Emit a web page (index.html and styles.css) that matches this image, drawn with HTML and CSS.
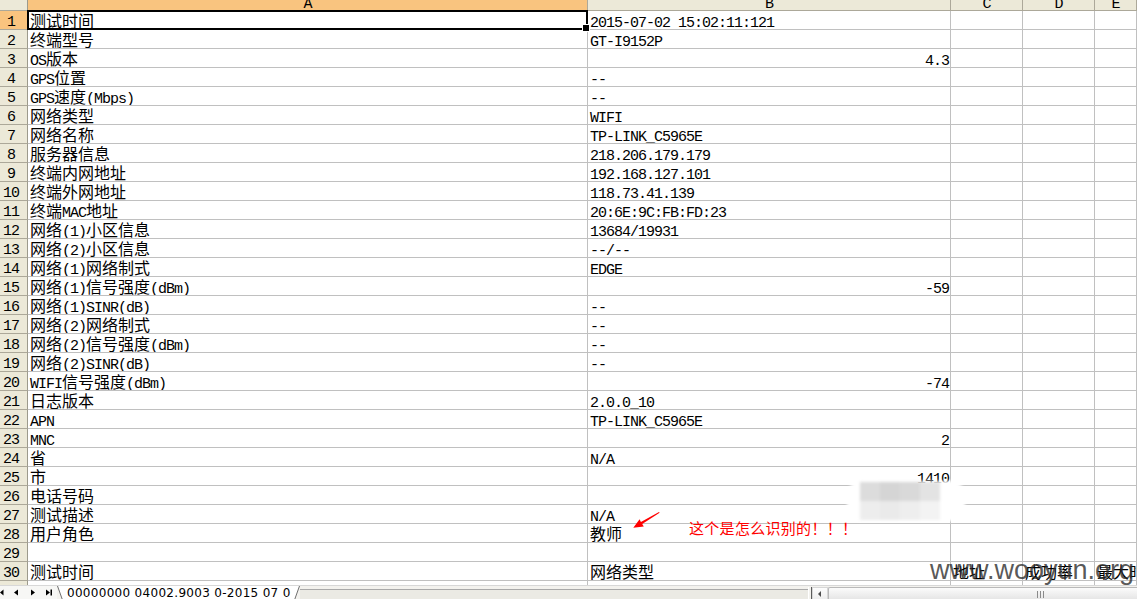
FILE: index.html
```html
<!DOCTYPE html>
<html lang="zh-CN">
<head>
<meta charset="utf-8">
<title>Sheet1</title>
<link rel="stylesheet" href="styles.css">
</head>
<body>
<div class="app">
  <div class="sheet">
    <div class="hd corner"></div>
    <div class="hd sel">A</div>
    <div class="hd">B</div>
    <div class="hd">C</div>
    <div class="hd">D</div>
    <div class="hd">E</div>

    <div class="rh sel">1</div>
    <div class="c a1">测试时间</div>
    <div class="c"><span class="m">2015-07-02 15:02:11:121</span></div>
    <div class="c"></div><div class="c"></div><div class="c"></div>

    <div class="rh">2</div>
    <div class="c">终端型号</div>
    <div class="c"><span class="m">GT-I9152P</span></div>
    <div class="c"></div><div class="c"></div><div class="c"></div>

    <div class="rh">3</div>
    <div class="c"><span class="m">OS</span>版本</div>
    <div class="c num"><span class="m">4.3</span></div>
    <div class="c"></div><div class="c"></div><div class="c"></div>

    <div class="rh">4</div>
    <div class="c"><span class="m">GPS</span>位置</div>
    <div class="c"><span class="m">--</span></div>
    <div class="c"></div><div class="c"></div><div class="c"></div>

    <div class="rh">5</div>
    <div class="c"><span class="m">GPS</span>速度<span class="m">(Mbps)</span></div>
    <div class="c"><span class="m">--</span></div>
    <div class="c"></div><div class="c"></div><div class="c"></div>

    <div class="rh">6</div>
    <div class="c">网络类型</div>
    <div class="c"><span class="m">WIFI</span></div>
    <div class="c"></div><div class="c"></div><div class="c"></div>

    <div class="rh">7</div>
    <div class="c">网络名称</div>
    <div class="c"><span class="m">TP-LINK_C5965E</span></div>
    <div class="c"></div><div class="c"></div><div class="c"></div>

    <div class="rh">8</div>
    <div class="c">服务器信息</div>
    <div class="c"><span class="m">218.206.179.179</span></div>
    <div class="c"></div><div class="c"></div><div class="c"></div>

    <div class="rh">9</div>
    <div class="c">终端内网地址</div>
    <div class="c"><span class="m">192.168.127.101</span></div>
    <div class="c"></div><div class="c"></div><div class="c"></div>

    <div class="rh">10</div>
    <div class="c">终端外网地址</div>
    <div class="c"><span class="m">118.73.41.139</span></div>
    <div class="c"></div><div class="c"></div><div class="c"></div>

    <div class="rh">11</div>
    <div class="c">终端<span class="m">MAC</span>地址</div>
    <div class="c"><span class="m">20:6E:9C:FB:FD:23</span></div>
    <div class="c"></div><div class="c"></div><div class="c"></div>

    <div class="rh">12</div>
    <div class="c">网络<span class="m">(1)</span>小区信息</div>
    <div class="c"><span class="m">13684/19931</span></div>
    <div class="c"></div><div class="c"></div><div class="c"></div>

    <div class="rh">13</div>
    <div class="c">网络<span class="m">(2)</span>小区信息</div>
    <div class="c"><span class="m">--/--</span></div>
    <div class="c"></div><div class="c"></div><div class="c"></div>

    <div class="rh">14</div>
    <div class="c">网络<span class="m">(1)</span>网络制式</div>
    <div class="c"><span class="m">EDGE</span></div>
    <div class="c"></div><div class="c"></div><div class="c"></div>

    <div class="rh">15</div>
    <div class="c">网络<span class="m">(1)</span>信号强度<span class="m">(dBm)</span></div>
    <div class="c num"><span class="m">-59</span></div>
    <div class="c"></div><div class="c"></div><div class="c"></div>

    <div class="rh">16</div>
    <div class="c">网络<span class="m">(1)SINR(dB)</span></div>
    <div class="c"><span class="m">--</span></div>
    <div class="c"></div><div class="c"></div><div class="c"></div>

    <div class="rh">17</div>
    <div class="c">网络<span class="m">(2)</span>网络制式</div>
    <div class="c"><span class="m">--</span></div>
    <div class="c"></div><div class="c"></div><div class="c"></div>

    <div class="rh">18</div>
    <div class="c">网络<span class="m">(2)</span>信号强度<span class="m">(dBm)</span></div>
    <div class="c"><span class="m">--</span></div>
    <div class="c"></div><div class="c"></div><div class="c"></div>

    <div class="rh">19</div>
    <div class="c">网络<span class="m">(2)SINR(dB)</span></div>
    <div class="c"><span class="m">--</span></div>
    <div class="c"></div><div class="c"></div><div class="c"></div>

    <div class="rh">20</div>
    <div class="c"><span class="m">WIFI</span>信号强度<span class="m">(dBm)</span></div>
    <div class="c num"><span class="m">-74</span></div>
    <div class="c"></div><div class="c"></div><div class="c"></div>

    <div class="rh">21</div>
    <div class="c">日志版本</div>
    <div class="c"><span class="m">2.0.0_10</span></div>
    <div class="c"></div><div class="c"></div><div class="c"></div>

    <div class="rh">22</div>
    <div class="c"><span class="m">APN</span></div>
    <div class="c"><span class="m">TP-LINK_C5965E</span></div>
    <div class="c"></div><div class="c"></div><div class="c"></div>

    <div class="rh">23</div>
    <div class="c"><span class="m">MNC</span></div>
    <div class="c num"><span class="m">2</span></div>
    <div class="c"></div><div class="c"></div><div class="c"></div>

    <div class="rh">24</div>
    <div class="c">省</div>
    <div class="c"><span class="m">N/A</span></div>
    <div class="c"></div><div class="c"></div><div class="c"></div>

    <div class="rh">25</div>
    <div class="c">市</div>
    <div class="c num"><span class="m">1410</span></div>
    <div class="c"></div><div class="c"></div><div class="c"></div>

    <div class="rh">26</div>
    <div class="c">电话号码</div>
    <div class="c"></div>
    <div class="c"></div><div class="c"></div><div class="c"></div>

    <div class="rh">27</div>
    <div class="c">测试描述</div>
    <div class="c"><span class="m">N/A</span></div>
    <div class="c"></div><div class="c"></div><div class="c"></div>

    <div class="rh">28</div>
    <div class="c">用户角色</div>
    <div class="c">教师</div>
    <div class="c"></div><div class="c"></div><div class="c"></div>

    <div class="rh">29</div>
    <div class="c"></div>
    <div class="c"></div>
    <div class="c"></div><div class="c"></div><div class="c"></div>

    <div class="rh">30</div>
    <div class="c">测试时间</div>
    <div class="c">网络类型</div>
    <div class="c">地址</div><div class="c">成功率</div><div class="c">最大时</div>

    <div class="rh part"></div>
    <div class="c part"></div>
    <div class="c part"></div>
    <div class="c part"></div><div class="c part"></div><div class="c part"></div>
  </div>

  <div class="bar">
    <div class="nav">
      <svg width="56" height="14" viewBox="0 0 56 14">
        <polygon points="0,6.5 3.5,3.5 3.5,9.5" fill="#000"/>
        <polygon points="14,6.5 18,3.5 18,9.5" fill="#000"/>
        <polygon points="31,3.5 35,6.5 31,9.5" fill="#000"/>
        <polygon points="46,3.5 50,6.5 46,9.5" fill="#000"/>
        <rect x="50.5" y="3.5" width="1.5" height="6" fill="#000"/>
      </svg>
    </div>
    <div class="tab">
      <svg class="edge" width="7" height="14" viewBox="0 0 7 14">
        <polygon points="0.5,0 7,0 7,14 5.5,14" fill="#fff"/>
        <line x1="0.5" y1="0" x2="5.5" y2="14" stroke="#6f6f6f" stroke-width="1"/>
      </svg>
      <span class="tabtext">00000000 04002.9003 0-2015 07 0</span>
      <svg class="edge" width="8" height="14" viewBox="0 0 8 14">
        <polygon points="0,0 7.5,0 2.5,14 0,14" fill="#fff"/>
        <line x1="7.5" y1="0" x2="2.5" y2="14" stroke="#6f6f6f" stroke-width="1"/>
      </svg>
    </div>
    <div class="tabfill"></div>
    <div class="split"></div>
    <div class="hscroll">
      <div class="sbtn">
        <svg width="16" height="12" viewBox="0 0 16 12">
          <polygon points="5,6 8,3 8,9" fill="#4d4d4d"/>
        </svg>
      </div>
      <div class="thumb">
        <svg class="grip" width="9" height="7" viewBox="0 0 9 7">
          <rect x="0" y="0" width="1" height="7" fill="#8a8a8a"/>
          <rect x="3" y="0" width="1" height="7" fill="#8a8a8a"/>
          <rect x="6" y="0" width="1" height="7" fill="#8a8a8a"/>
        </svg>
      </div>
    </div>
  </div>

  <div class="smudge"><i></i><i></i><i></i><i></i><i></i><i></i><i></i><i></i></div>

  <svg class="arrow" width="34" height="22" viewBox="0 0 34 22">
    <polygon points="3.3,17.7 13.8,16.4 12.2,14 29.6,2.8 29,1.9 10.9,11.9 9.6,9.3" fill="#ff0000"/>
  </svg>
  <div class="note">这个是怎么识别的！！！</div>

  <div class="wm">www.wooyun.org</div>
</div>
</body>
</html>
```

FILE: styles.css
```css
* {
  box-sizing: border-box;
  margin: 0;
  padding: 0;
}

html, body {
  width: 1137px;
  height: 599px;
  overflow: hidden;
  background: #fff;
}

.app {
  position: relative;
  width: 1137px;
  height: 599px;
  overflow: hidden;
  background: #fff;
  color: #000;
}

.sheet {
  display: grid;
  grid-template-columns: 28px 560px 363px 72px 72px 42px;
  grid-template-rows: 11px repeat(30, 19px) 4px;
}

/* column headers */
.hd {
  background: #ece9d8;
  border-right: 1px solid #aca899;
  border-bottom: 1px solid #aca899;
  font-family: "Liberation Mono", monospace;
  font-size: 15px;
  line-height: 9px;
  letter-spacing: -1px;
  text-align: center;
  overflow: hidden;
}

.hd.corner {
  border-right-color: #9c9a8c;
}

.hd.sel {
  background: #f9c47f;
  border-bottom-color: #0a246a;
}

/* row headers */
.rh {
  background: #ece9d8;
  border-right: 1px solid #9c9a8c;
  border-bottom: 1px solid #aca899;
  font-family: "Liberation Mono", monospace;
  font-size: 15px;
  line-height: 13px;
  letter-spacing: -1px;
  text-align: center;
  padding: 5px 5px 0 0;
  overflow: hidden;
}

.rh.sel {
  background: #f9c47f;
  border-right-color: #0a246a;
}

.rh.part {
  border-bottom: none;
  padding: 0;
}

/* cells */
.c {
  border-right: 1px solid #c0c0c0;
  border-bottom: 1px solid #c0c0c0;
  font-family: "Noto Sans CJK SC", sans-serif;
  font-size: 16px;
  line-height: 18px;
  padding: 0 2px;
  white-space: nowrap;
  overflow: hidden;
}

.c.part {
  border-bottom: none;
}

.c.num {
  text-align: right;
  padding-right: 1px;
}

.m {
  font-family: "Liberation Mono", monospace;
  font-size: 15px;
  letter-spacing: -1px;
  line-height: 12px;
}

/* active cell cursor */
.c.a1 {
  position: relative;
  overflow: visible;
}

.c.a1::after {
  content: "";
  position: absolute;
  left: -1px;
  top: -1px;
  right: -1px;
  bottom: -1px;
  border: 2px solid #000;
  pointer-events: none;
}

.c.a1::before {
  content: "";
  position: absolute;
  right: -3px;
  bottom: -3px;
  width: 6px;
  height: 6px;
  background: #000;
  border: 1px solid #fff;
  z-index: 2;
}

/* bottom bar */
.bar {
  display: flex;
  height: 14px;
  background: #f3f2ee;
  border-top: 1px solid #d8d8d8;
}

.nav {
  width: 57px;
  flex: none;
  background: #f7f7f5;
}

.nav svg {
  display: block;
}

.tab {
  display: flex;
  flex: none;
  height: 14px;
}

.tab .edge {
  display: block;
  flex: none;
}

.tabtext {
  display: block;
  background: #fff;
  font-family: "DejaVu Sans", sans-serif;
  font-size: 12px;
  line-height: 13px;
  letter-spacing: 0.3px;
  padding: 1px 1px 0 3px;
  white-space: nowrap;
}

.tabfill {
  flex: 1;
  margin-top: 3px;
  background: #ebeae4;
  border-top: 1px solid #a9a9a9;
}

.split {
  width: 4px;
  flex: none;
  background: #f3f2ee;
  border-left: 1px solid #fff;
  border-right: 1px solid #5b5b5b;
  margin-top: 1px;
}

.hscroll {
  display: flex;
  width: 325px;
  flex: none;
  margin-top: 1px;
  background: #f4f4f4;
}

.sbtn {
  width: 16px;
  flex: none;
  background: linear-gradient(#fdfdfd, #eeeeee);
  border: 1px solid #d6d6d6;
  border-bottom: none;
}

.sbtn svg {
  display: block;
}

.thumb {
  flex: 1;
  display: flex;
  justify-content: center;
  padding: 3px 0 0 0;
  background: linear-gradient(#fbfbfb, #e6e6e6);
  border: 1px solid #b9b9b9;
  border-bottom: none;
  border-right: none;
  border-top-left-radius: 2px;
}

.grip {
  display: block;
  margin-left: 116px;
}

/* overlays */
.smudge {
  position: absolute;
  left: 847px;
  top: 481px;
  width: 118px;
  height: 40px;
  padding: 1px 0 0 13px;
  background: #fff;
  border-radius: 14px;
  filter: blur(1.5px);
  display: grid;
  grid-template-columns: repeat(4, 20px);
  grid-template-rows: 19px 19px;
}

.smudge i {
  display: block;
}

.smudge i:nth-child(1) { background: #dcdcdc; }
.smudge i:nth-child(2) { background: #d5d5d5; }
.smudge i:nth-child(3) { background: #d9d9d9; }
.smudge i:nth-child(4) { background: #e3e3e3; }
.smudge i:nth-child(5) { background: #ededed; }
.smudge i:nth-child(6) { background: #eaeaea; }
.smudge i:nth-child(7) { background: #eeeeee; }
.smudge i:nth-child(8) { background: #f3f3f3; }

.arrow {
  position: absolute;
  left: 630px;
  top: 510px;
  display: block;
}

.note {
  position: absolute;
  left: 689px;
  top: 520px;
  font-family: "Noto Sans CJK SC", sans-serif;
  font-size: 15px;
  line-height: 16px;
  letter-spacing: 0.3px;
  color: #ff0000;
  white-space: nowrap;
}

.wm {
  position: absolute;
  left: 930px;
  top: 557px;
  font-family: "Liberation Sans", Arial, sans-serif;
  font-size: 27px;
  line-height: 27px;
  color: rgba(45, 45, 45, 0.8);
  white-space: nowrap;
}
```
